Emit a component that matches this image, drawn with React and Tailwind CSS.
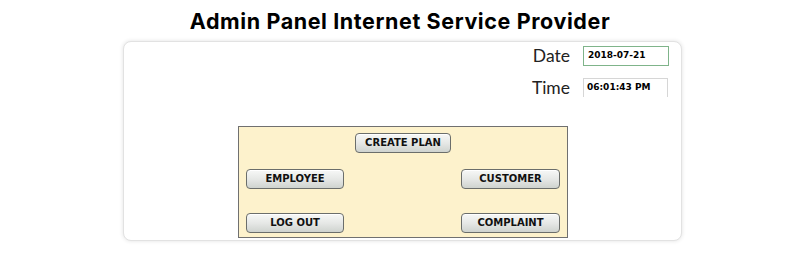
const PanelButton = ({ label, width }) => {
  return (
    <button
      className={`h-[20px] ${width} rounded-[4px] border border-[#6b6e6b] bg-gradient-to-b from-[#f7f8f7] via-[#e6e8e6] to-[#cfd3cf] shadow-[inset_0_1px_0_#ffffff] text-[10px] font-bold leading-none text-[#111] font-['DejaVu_Sans',sans-serif]`}
    >
      {label}
    </button>
  );
};

const App = () => {
  return (
    <div className="w-[800px] h-[256px] bg-white overflow-hidden">
      {/* title */}
      <h1 className="pt-[5px] h-[41px] text-center text-[21.5px] font-bold text-black font-['Inter',sans-serif] tracking-[0.6px]">
        Admin Panel Internet Service Provider
      </h1>

      {/* card */}
      <div className="ml-[123px] w-[559px] h-[200px] rounded-lg border border-[#e2e2e2] shadow-[0_0_4px_rgba(0,0,0,0.12)] bg-white flex flex-col">
        {/* date and time */}
        <div className="pt-[4px] pr-[12px] flex flex-col items-end gap-[12px]">
          <div className="flex items-center gap-[13px] h-[20px]">
            <span className="text-[17.5px] leading-none text-[#222] font-['Lato',sans-serif]">Date</span>
            <div className="w-[86px] h-[20px] border border-[#7fb48a] flex items-center pl-[4px] text-[9px] font-bold text-black font-['DejaVu_Sans',sans-serif]">
              2018-07-21
            </div>
          </div>
          <div className="flex items-center gap-[13px] pr-[1px] h-[19px]">
            <span className="text-[17.5px] leading-none text-[#222] font-['Lato',sans-serif]">Time</span>
            <div className="w-[85px] h-[19px] border-t border-l border-r border-[#d6d6d6] flex items-center pl-[3px] text-[9px] font-bold text-black font-['DejaVu_Sans',sans-serif]">
              06:01:43 PM
            </div>
          </div>
        </div>

        {/* menu panel */}
        <div className="mt-[29px] ml-[114px] w-[330px] h-[112px] bg-[#fdf2cc] border border-[#707070] px-[7px] pt-[6px] flex flex-col">
          <div className="flex justify-center">
            <PanelButton label="CREATE PLAN" width="w-[96px]" />
          </div>
          <div className="mt-[16px] flex justify-between">
            <PanelButton label="EMPLOYEE" width="w-[98px]" />
            <PanelButton label="CUSTOMER" width="w-[99px]" />
          </div>
          <div className="mt-[24px] flex justify-between">
            <PanelButton label="LOG OUT" width="w-[98px]" />
            <PanelButton label="COMPLAINT" width="w-[99px]" />
          </div>
        </div>
      </div>
    </div>
  );
};

export default App;
